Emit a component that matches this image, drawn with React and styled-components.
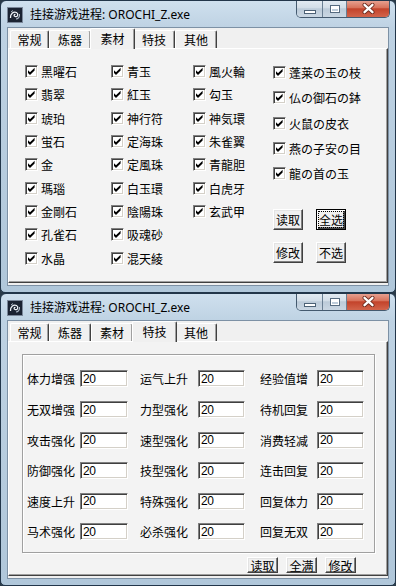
import React from 'react';
import styled, { createGlobalStyle } from 'styled-components';

const Global = createGlobalStyle`
  html, body { margin: 0; padding: 0; background: #2a3a48; }
  body {
    width: 396px; height: 586px; overflow: hidden;
    font-family: "Noto Sans CJK SC", "Liberation Sans", sans-serif;
  }
  * { box-sizing: border-box; }
`;

const Screen = styled.div`
  display: flex;
  flex-direction: column;
  width: 396px;
  height: 586px;
`;

const Win = styled.div`
  height: ${p => p.$h}px;
  display: flex;
  flex-direction: column;
  border: 1px solid #22364a;
  border-radius: 6px 6px 5px 5px;
  background: linear-gradient(180deg, #cfe0ee 0px, #bed2e3 27px, #b0c7da 100%);
  overflow: hidden;
`;

const TitleBar = styled.div`
  height: 26px;
  flex: none;
  display: flex;
  align-items: center;
  padding-left: 6px;
`;

const AppIcon = styled.svg`
  width: 16px;
  height: 16px;
  margin-top: 2px;
  flex: none;
`;

const TitleText = styled.span`
  margin-left: 7px;
  font-family: "Noto Sans", "Noto Sans CJK SC", sans-serif;
  font-size: 12px;
  color: #000;
  white-space: nowrap;
`;

const Caption = styled.div`
  margin-left: auto;
  margin-right: 5px;
  margin-top: -1px;
  align-self: flex-start;
  height: 18px;
  display: flex;
  border: 1px solid #445a6f;
  border-top: none;
  border-radius: 0 0 5px 5px;
  overflow: hidden;
`;

const CapBtn = styled.div`
  width: ${p => p.$w}px;
  height: 100%;
  display: flex;
  align-items: center;
  justify-content: center;
  border-left: ${p => (p.$first ? 'none' : '1px solid #6a7f93')};
  background: ${p =>
    p.$close
      ? 'linear-gradient(180deg, #e9a697 0%, #d8735c 45%, #c3432b 52%, #d2644b 100%)'
      : 'linear-gradient(180deg, #e4ecf3 0%, #d3dee8 45%, #bccbd9 52%, #cad7e3 100%)'};
`;

const MinGlyph = styled.div`
  width: 12px;
  height: 4px;
  margin-top: 6px;
  background: #fff;
  border: 1px solid #4d6276;
`;

const MaxGlyph = styled.div`
  width: 10px;
  height: 8px;
  border: 1px solid #566b80;
  box-shadow: inset 0 0 0 1px #ffffff, inset 0 2px 0 1px #ffffff;
`;

const Client = styled.div`
  flex: 1;
  margin: 0 6px 6px 6px;
  background: #f0f0f0;
  border: 1px solid #7d91a5;
  display: flex;
  flex-direction: column;
`;

const TabStrip = styled.div`
  height: 20px;
  flex: none;
  display: flex;
  align-items: flex-end;
  padding-left: 2px;
`;

const Tab = styled.div`
  position: relative;
  z-index: ${p => (p.$active ? 2 : 1)};
  width: ${p => p.$w + (p.$active ? 3 : 0)}px;
  height: ${p => (p.$active ? 21 : 18)}px;
  margin: ${p => (p.$active ? '0 -2px -1px -1px' : '0')};
  display: flex;
  align-items: ${p => (p.$active ? 'flex-start' : 'center')};
  padding-top: ${p => (p.$active ? '1px' : '0')};
  justify-content: center;
  background: #f0f0f0;
  border-top: 1px solid #ffffff;
  border-left: 1px solid #ffffff;
  border-right: 1px solid #404040;
  box-shadow: inset -1px 0 0 #a0a0a0;
  border-radius: 2px 2px 0 0;
  font-size: 12px;
  color: #000;
`;

const Panel = styled.div`
  flex: 1;
  margin-bottom: 2px;
  background: #f3f3f3;
  border: 1px solid;
  border-color: #ffffff #404040 #404040 #ffffff;
  box-shadow: inset -1px -1px 0 #a0a0a0;
`;

/* ---------- Window 1 (素材) ---------- */

const MatPanel = styled(Panel)`
  display: flex;
  padding: 11px 0 0 16px;
`;

const Col = styled.div`
  width: ${p => (p.$w ? `${p.$w}px` : 'auto')};
  display: flex;
  flex-direction: column;
  flex: none;
`;

const CheckRow = styled.div`
  height: ${p => p.$h}px;
  display: flex;
  align-items: center;
  gap: 3px;
  font-size: 12px;
  color: #000;
  white-space: nowrap;
`;

const Box = styled.span`
  width: 13px;
  height: 13px;
  flex: none;
  background: #fff;
  border: 1px solid;
  border-color: #808080 #ffffff #ffffff #808080;
  box-shadow: inset 1px 1px 0 #404040, inset -1px -1px 0 #d4d0c8;
  display: flex;
`;

const Check = () => (
  <Box>
    <svg width="11" height="11" viewBox="0 0 11 11">
      <polygon points="2,4.3 4,6.3 8.6,1.8 8.6,4.4 4,9 2,7" fill="#000" />
    </svg>
  </Box>
);

const BtnGrid = styled.div`
  margin-top: 22.75px;
  display: grid;
  grid-template-columns: 30px 30px;
  column-gap: 13px;
  row-gap: 12px;
`;

const Btn = styled.div`
  width: ${p => p.$w || 30}px;
  height: ${p => p.$h || 21}px;
  display: flex;
  align-items: center;
  justify-content: center;
  background: #f0f0f0;
  border: 1px solid;
  border-color: ${p => (p.$default ? '#000 #000 #000 #000' : '#ffffff #404040 #404040 #ffffff')};
  box-shadow: ${p =>
    p.$default
      ? 'inset 1px 1px 0 #ffffff, inset -1px -1px 0 #404040, inset -2px -2px 0 #808080'
      : 'inset -1px -1px 0 #808080, inset 1px 1px 0 #e3e3e3'};
  outline: ${p => (p.$default ? '1px dotted #000' : 'none')};
  outline-offset: -3px;
  font-size: 12px;
  color: #000;
  white-space: nowrap;
`;

/* ---------- Window 2 (特技) ---------- */

const SkillPanel = styled(Panel)`
  display: flex;
  flex-direction: column;
  padding: 12px 0 0 13px;
`;

const GroupBox = styled.div`
  width: 353px;
  height: 199px;
  border: 1px solid #a0a0a0;
  box-shadow: inset 1px 1px 0 #ffffff, 1px 1px 0 #ffffff;
  padding: 8.7px 0 0 4px;
  display: grid;
  grid-template-columns: 53px 60px 58px 62px 57px 47px;
  grid-auto-rows: 30.6px;
  align-items: center;
`;

const Label = styled.span`
  font-size: 12px;
  color: #000;
  white-space: nowrap;
`;

const Field = styled.div`
  width: ${p => p.$w}px;
  height: 17px;
  background: #fff;
  border: 1px solid;
  border-color: #808080 #ffffff #ffffff #808080;
  box-shadow: inset 1px 1px 0 #404040, inset -1px -1px 0 #d4d0c8;
  padding-left: 2px;
  display: flex;
  align-items: center;
  font-family: "Liberation Sans", sans-serif;
  font-size: 12px;
  letter-spacing: -0.4px;
  color: #000;
`;

const BottomBar = styled.div`
  margin-top: 4px;
  margin-right: 31px;
  display: flex;
  justify-content: flex-end;
  gap: 8px;
`;

/* ---------- Data ---------- */

const col1 = ['黑曜石', '翡翠', '琥珀', '蛍石', '金', '瑪瑙', '金剛石', '孔雀石', '水晶'];
const col2 = ['青玉', '紅玉', '神行符', '定海珠', '定風珠', '白玉環', '陰陽珠', '吸魂砂', '混天綾'];
const col3 = ['風火輪', '勾玉', '神気環', '朱雀翼', '青龍胆', '白虎牙', '玄武甲'];
const col4 = ['蓬莱の玉の枝', '仏の御石の鉢', '火鼠の皮衣', '燕の子安の目', '龍の首の玉'];

const skills = [
  ['体力增强', '运气上升', '经验值增'],
  ['无双增强', '力型强化', '待机回复'],
  ['攻击强化', '速型强化', '消费轻减'],
  ['防御强化', '技型强化', '连击回复'],
  ['速度上升', '特殊强化', '回复体力'],
  ['马术强化', '必杀强化', '回复无双'],
];

const tabs = [
  ['常规', 39],
  ['炼器', 42],
  ['素材', 42],
  ['特技', 42],
  ['其他', 42],
];

function Frame({ h, active, children }) {
  return (
    <Win $h={h}>
      <TitleBar>
        <AppIcon viewBox="0 0 16 16">
          <rect x="0.5" y="0.5" width="15" height="15" fill="#1b2332" stroke="#7b889a" />
          <path d="M3.5 11 C3 7, 6.5 4, 9.5 5.5 C12 7, 10.5 10.5, 8 9.5 C6.5 9, 7 7, 8.5 7.5" stroke="#eef2f7" strokeWidth="1.3" fill="none" />
          <path d="M9 12 C11 12, 13 10, 12.5 7" stroke="#aab6c4" strokeWidth="1.1" fill="none" />
          <path d="M4 5 L6 3.5" stroke="#aab6c4" strokeWidth="1" fill="none" />
        </AppIcon>
        <TitleText>挂接游戏进程: OROCHI_Z.exe</TitleText>
        <Caption>
          <CapBtn $w={25} $first>
            <MinGlyph />
          </CapBtn>
          <CapBtn $w={24}>
            <MaxGlyph />
          </CapBtn>
          <CapBtn $w={43} $close>
            <svg width="13" height="11" viewBox="0 0 13 11">
              <path d="M2.5 1.8 L10.5 9.2 M10.5 1.8 L2.5 9.2" stroke="#6b2a1e" strokeWidth="4" strokeLinecap="round" />
              <path d="M2.5 1.8 L10.5 9.2 M10.5 1.8 L2.5 9.2" stroke="#ffffff" strokeWidth="2.3" strokeLinecap="round" />
            </svg>
          </CapBtn>
        </Caption>
      </TitleBar>
      <Client>
        <TabStrip>
          {tabs.map(([t, w]) => (
            <Tab key={t} $w={w} $active={t === active}>
              {t}
            </Tab>
          ))}
        </TabStrip>
        {children}
      </Client>
    </Win>
  );
}

export default function App() {
  return (
    <>
      <Global />
      <Screen>
        <Frame h={293} active="素材">
          <MatPanel>
            {[col1, col2, col3].map((list, i) => (
              <Col key={i} $w={[86, 82, 80][i]}>
                {list.map(t => (
                  <CheckRow key={t} $h={23.3}>
                    <Check />
                    {t}
                  </CheckRow>
                ))}
              </Col>
            ))}
            <Col>
              {col4.map(t => (
                <CheckRow key={t} $h={25.25}>
                  <Check />
                  {t}
                </CheckRow>
              ))}
              <BtnGrid>
                <Btn>读取</Btn>
                <Btn $default>全选</Btn>
                <Btn>修改</Btn>
                <Btn>不选</Btn>
              </BtnGrid>
            </Col>
          </MatPanel>
        </Frame>
        <Frame h={293} active="特技">
          <SkillPanel>
            <GroupBox>
              {skills.map(row =>
                row.map((name, j) => (
                  <React.Fragment key={name}>
                    <Label>{name}</Label>
                    <Field $w={j === 0 ? 48 : 47}>20</Field>
                  </React.Fragment>
                ))
              )}
            </GroupBox>
            <BottomBar>
              <Btn $w={31} $h={16}>读取</Btn>
              <Btn $w={31} $h={16}>全满</Btn>
              <Btn $w={31} $h={16}>修改</Btn>
            </BottomBar>
          </SkillPanel>
        </Frame>
      </Screen>
    </>
  );
}
